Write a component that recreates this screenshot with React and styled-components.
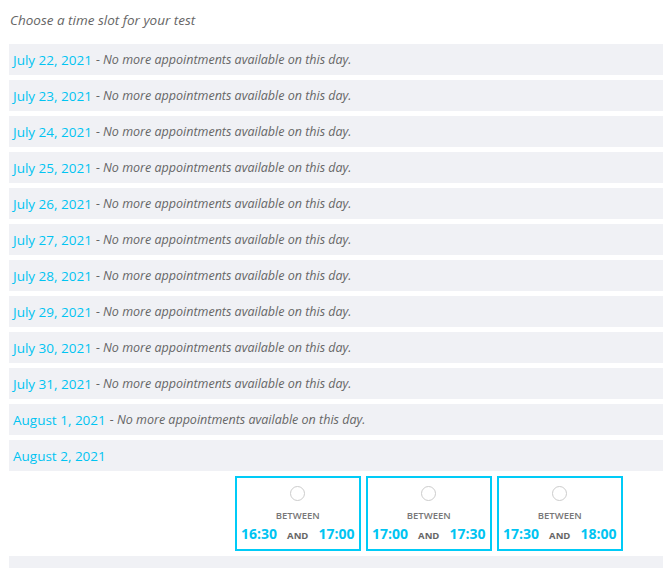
import React from "react";
import styled, { createGlobalStyle } from "styled-components";

const GlobalStyle = createGlobalStyle`
    body {
        margin: 0;
        background: #fff;
        font-family: "Open Sans", "Noto Sans", sans-serif;
        overflow: hidden;
    }
`

const Page = styled.div`
    padding: 9px 0 0 9px;
`

const Title = styled.p`
    margin: 0 0 13px 1px;
    font-size: 13.5px;
    font-style: italic;
    color: #666;
    line-height: 22px;
`

const List = styled.div`
    display: flex;
    flex-direction: column;
    gap: 5px;
`

const DayRow = styled.div`
    background: #f0f1f5;
    height: 31px;
    display: flex;
    align-items: center;
    padding-left: 4px;
    font-size: 13.5px;
`

const DateLabel = styled.span`
    color: #00c4f2;
`

const Note = styled.span`
    color: #666;
    font-size: 12.5px;
    font-style: italic;
    margin-left: 4px;
`

const Slots = styled.div`
    display: flex;
    gap: 5.5px;
    padding-left: 226px;
`

const Slot = styled.label`
    box-sizing: border-box;
    width: 125.5px;
    height: 75px;
    border: 2px solid #00cbf7;
    display: flex;
    flex-direction: column;
    align-items: center;
    padding-top: 8px;
    cursor: pointer;
`

const Radio = styled.span`
    width: 15px;
    height: 15px;
    border-radius: 50%;
    border: 1px solid #ccc;
    box-sizing: border-box;
`

const Between = styled.span`
    margin-top: 9px;
    font-size: 9.5px;
    font-weight: 600;
    color: #777;
    text-transform: uppercase;
    line-height: 12px;
`

const Range = styled.div`
    display: flex;
    align-items: baseline;
    gap: 10px;
    margin-top: 2px;
`

const Time = styled.span`
    color: #00c4f2;
    font-weight: 700;
    font-size: 14px;
`

const And = styled.span`
    color: #666;
    font-weight: 700;
    font-size: 9.5px;
`

const full = ["July 22, 2021", "July 23, 2021", "July 24, 2021", "July 25, 2021", "July 26, 2021",
    "July 27, 2021", "July 28, 2021", "July 29, 2021", "July 30, 2021", "July 31, 2021", "August 1, 2021"];

const slots = [["16:30", "17:00"], ["17:00", "17:30"], ["17:30", "18:00"]];

export default function App() {
    return <Page>
        <GlobalStyle />
        <Title>Choose a time slot for your test</Title>
        <List>
            {full.map(d => (
                <DayRow key={d}>
                    <DateLabel>{d}</DateLabel>
                    <Note>- No more appointments available on this day.</Note>
                </DayRow>
            ))}
            <DayRow><DateLabel>August 2, 2021</DateLabel></DayRow>
            <Slots>
                {slots.map(([a, b]) => (
                    <Slot key={a}>
                        <Radio />
                        <Between>Between</Between>
                        <Range>
                            <Time>{a}</Time>
                            <And>AND</And>
                            <Time>{b}</Time>
                        </Range>
                    </Slot>
                ))}
            </Slots>
            <DayRow><DateLabel>August 3, 2021</DateLabel></DayRow>
        </List>
    </Page>
}
